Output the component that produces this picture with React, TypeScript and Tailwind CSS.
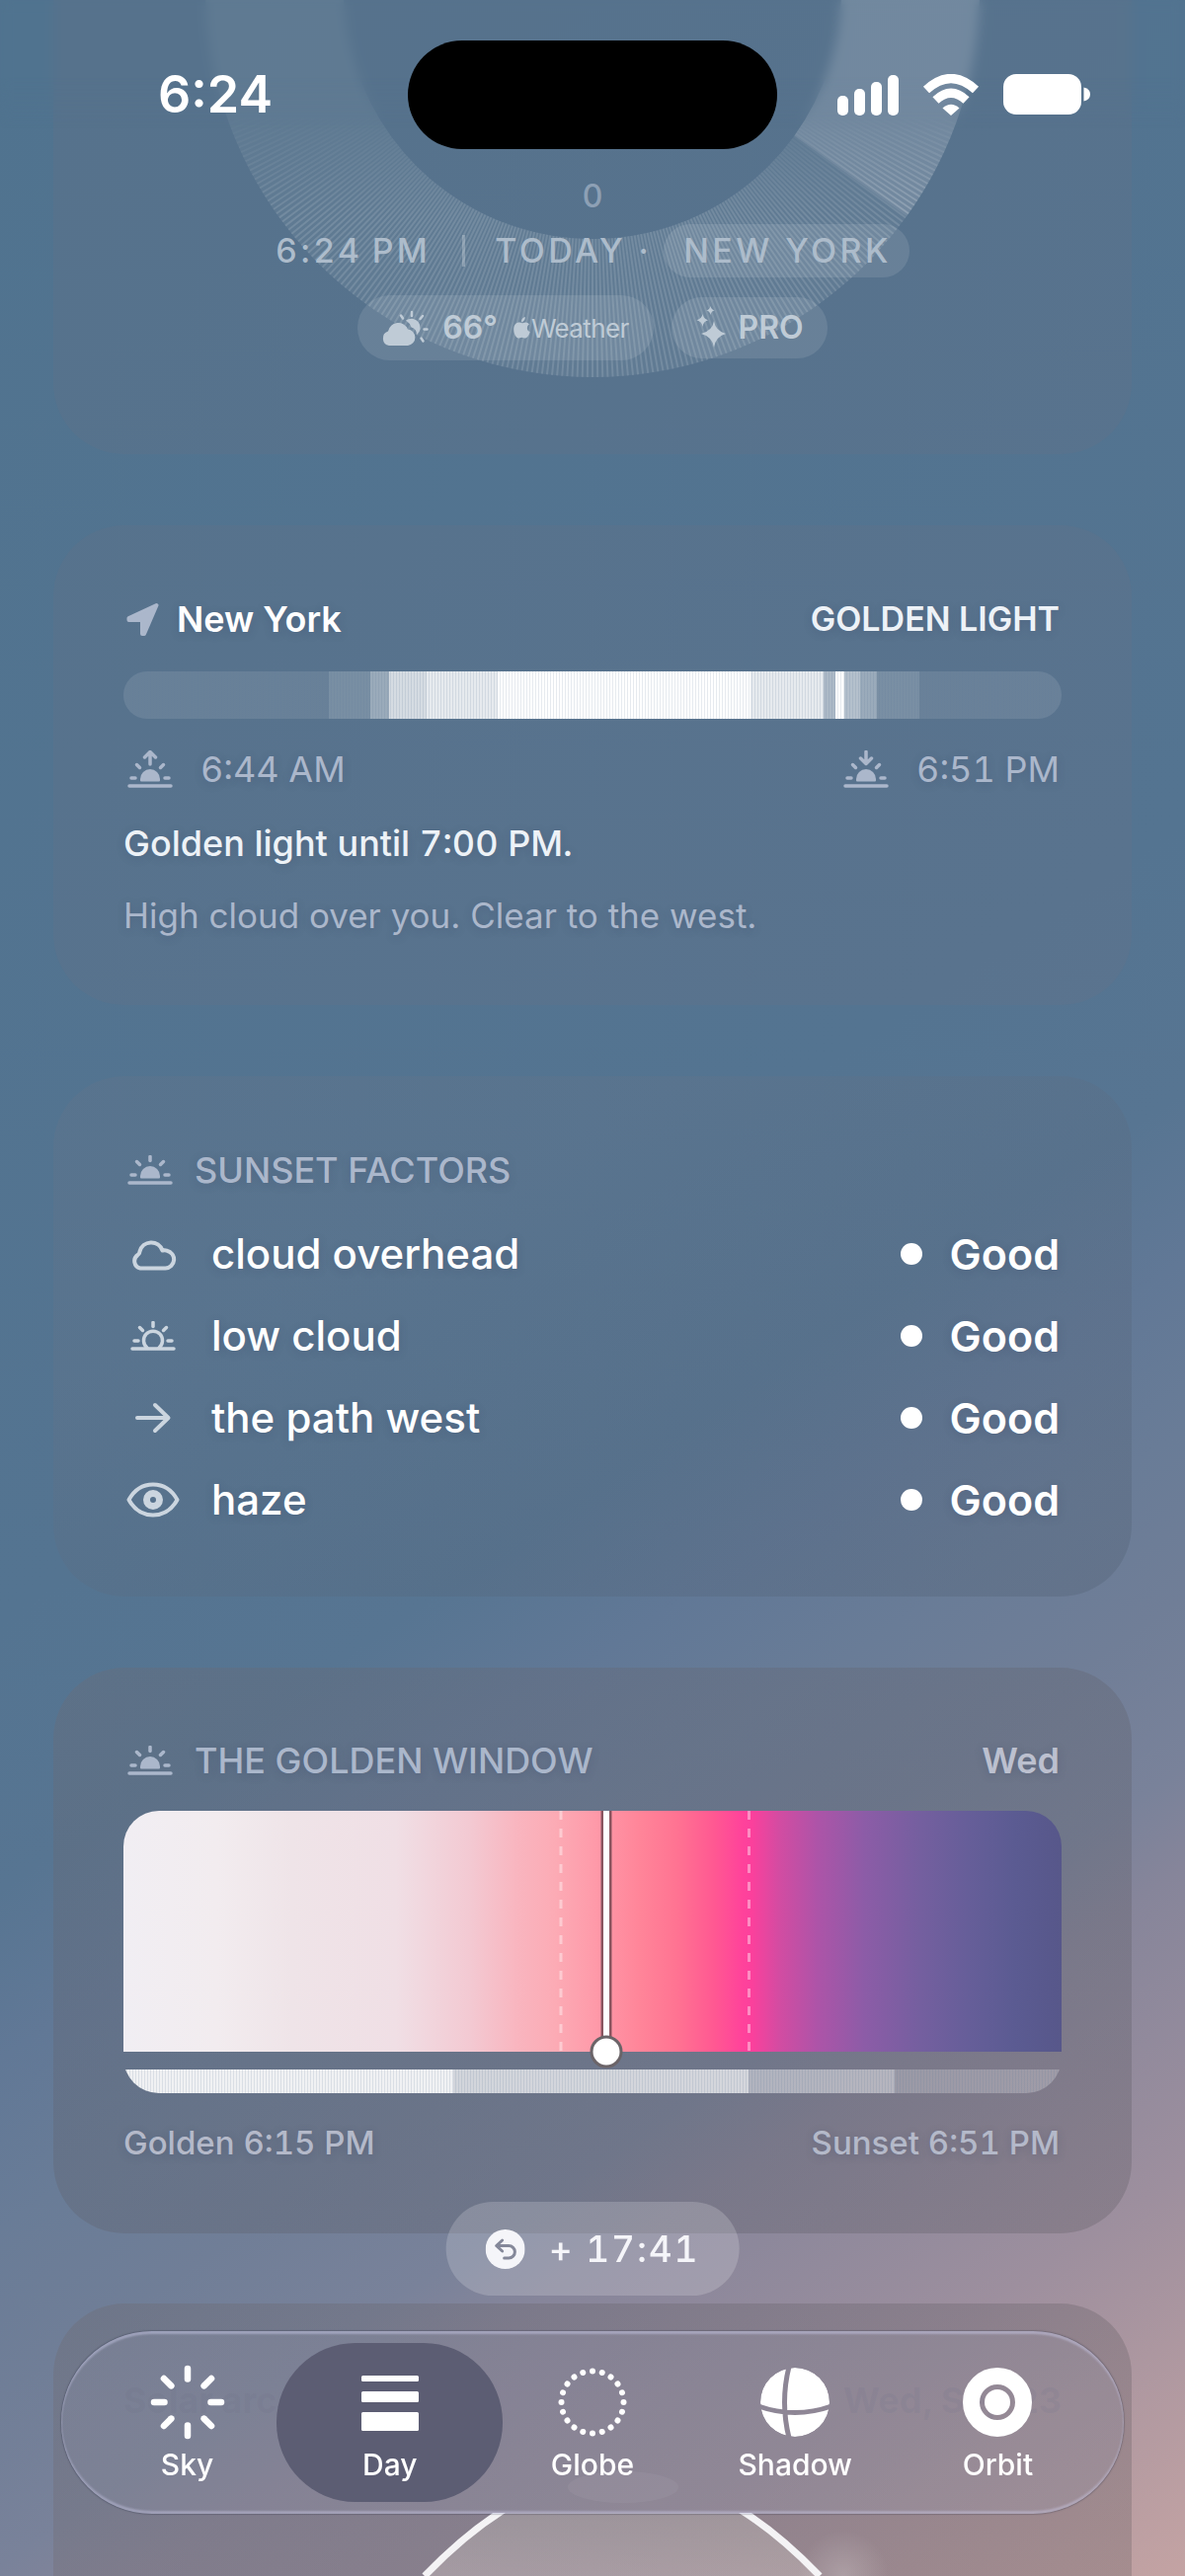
import type { ReactNode } from "react";

const FACTORS = [
  { name: "cloud overhead", rating: "Good", icon: <CloudIcon /> },
  { name: "low cloud", rating: "Good", icon: <SunIcon hollow /> },
  { name: "the path west", rating: "Good", icon: <ArrowIcon /> },
  { name: "haze", rating: "Good", icon: <EyeIcon /> },
];

// share of the day (out of 950) and brightness of each daylight band
const DAY_BANDS = [
  { size: 208, tone: "bg-white/10" },
  { size: 42, tone: "bg-white/20" },
  { size: 19, tone: "bg-white/40" },
  { size: 38, tone: "bg-white/75" },
  { size: 72, tone: "bg-white/85" },
  { size: 256, tone: "bg-white" },
  { size: 74, tone: "bg-white/85" },
  { size: 12, tone: "bg-white/50" },
  { size: 9, tone: "bg-white" },
  { size: 16, tone: "bg-white/55" },
  { size: 17, tone: "bg-white/40" },
  { size: 43, tone: "bg-white/20" },
  { size: 144, tone: "bg-white/10" },
];

const WINDOW_BANDS = [
  { size: 334, tone: "bg-white/90" },
  { size: 299, tone: "bg-white/70" },
  { size: 148, tone: "bg-white/45" },
  { size: 169, tone: "bg-white/25" },
];

const TABS = [
  { label: "Sky", icon: <SkyIcon /> },
  { label: "Day", icon: <DayIcon /> },
  { label: "Globe", icon: <GlobeIcon /> },
  { label: "Shadow", icon: <ShadowIcon /> },
  { label: "Orbit", icon: <OrbitIcon /> },
];

type SunIconProps = {
  arrow?: "up" | "down";
  hollow?: boolean;
};

/** Sun on the horizon, with an optional rise / set arrow */
function SunIcon({ arrow, hollow }: SunIconProps) {
  return (
    <svg
      viewBox={arrow ? "0 -8 46 38" : "0 0 46 30"}
      className={arrow ? "w-[46px] h-[38px]" : "w-[46px] h-[30px]"}
      fill="none"
      stroke="currentColor"
      strokeWidth="3.500"
      strokeLinecap="round"
      strokeLinejoin="round"
      aria-hidden="true"
    >
      <path d="M2 28H44" />
      {hollow ? (
        <path d="M17 27a9.5 9.5 0 1 1 12 0" />
      ) : (
        <path d="M13 22.500V21a10 10 0 0 1 20 0V22.500q0 1-1 1H14q-1 0-1-1z" fill="currentColor" stroke="none" />
      )}
      <path d="M4 20H8M38 20H42M9.500 6.500l3 3M36.500 6.500l-3 3" />
      {!arrow && <path d="M23 1.500V5.500" />}
      {arrow === "up" && <path d="M23 6V-6M17.500-1L23-6.500 28.500-1" />}
      {arrow === "down" && <path d="M23-6.500V5M17.500 0L23 5.500 28.500 0" />}
    </svg>
  );
}

function CloudIcon() {
  return (
    <svg viewBox="0 0 48 34" className="w-12 h-[34px]" fill="none" stroke="currentColor" strokeWidth="4" strokeLinejoin="round" aria-hidden="true">
      <path d="M11 31.500H36.500a9 9 0 0 0 1.500-17.800 6 6 0 0 0-4.500-.2A12 12 0 0 0 10.500 14.500q0 2-2 3.500A7.500 7.500 0 0 0 11 31.500z" />
    </svg>
  );
}

function ArrowIcon() {
  return (
    <svg viewBox="0 0 38 32" className="w-[38px] h-8" fill="none" stroke="currentColor" strokeWidth="4" strokeLinecap="round" strokeLinejoin="round" aria-hidden="true">
      <path d="M3 16H34M21 3L34.500 16 21 29" />
    </svg>
  );
}

function EyeIcon() {
  return (
    <svg viewBox="0 0 54 36" className="w-[54px] h-9" fill="none" stroke="currentColor" aria-hidden="true">
      <path d="M2.500 18C8 8 17 2.500 27 2.500S46 8 51.500 18C46 28 37 33.500 27 33.500S8 28 2.500 18z" strokeWidth="4" strokeLinejoin="round" />
      <circle cx="27" cy="18" r="6.500" strokeWidth="7" />
    </svg>
  );
}

function CloudSunIcon() {
  return (
    <svg viewBox="0 0 48 36" className="w-12 h-9" aria-hidden="true">
      <g stroke="currentColor" strokeWidth="2.500" strokeLinecap="round">
        <path d="M31 2V6M20 5.500l2 3M42 6l-2.500 3M43.500 19.500H46.500M40.500 28.500l2 3" />
      </g>
      <path d="M25 10.500a9 9 0 1 1 11 14.500Q36 19 30.500 17.500 29 13 25 10.500z" fill="currentColor" />
      <path d="M8 36a7.500 7.500 0 0 1-1-14.500A10.500 10.500 0 0 1 27 19.500a8.300 8.300 0 0 1 0 16.500z" fill="currentColor" />
    </svg>
  );
}

function AppleIcon() {
  return (
    <svg viewBox="0 0 17 22" className="w-[17px] h-[22px]" fill="currentColor" aria-hidden="true">
      <path d="M11.800 0q.2 2-1 3.500T8 5q-.2-2 1-3.300T11.800 0z" />
      <path d="M8.600 6.300c1 0 2-.9 3.700-.8 1.500.1 2.800.8 3.600 2-3 2-2.600 6.300.8 7.600C15.900 17.800 14.200 21.500 12 21.500c-1.400 0-1.900-.8-3.500-.8S6.300 21.500 5 21.500C2.700 21.500.2 17 .2 12.800c0-4.300 2.400-7.200 5-7.200 1.400 0 2.600.7 3.400.7z" />
    </svg>
  );
}

function SparklesIcon() {
  return (
    <svg viewBox="0 0 32 44" className="w-8 h-11" fill="currentColor" aria-hidden="true">
      <path d="M19 15q1.500 10 12 13-10.500 3-12 14Q17.500 31 6 28 17.500 25 19 15z" />
      <path d="M7.500 8q.7 5 5.500 6.200Q8.200 15.500 7.500 21 6.700 15.500 1.500 14.200 6.700 13 7.500 8z" />
      <path d="M15.500 0q.6 3.500 4 4.300Q16.100 5.200 15.500 9q-.6-3.800-4-4.700Q14.900 3.500 15.500 0z" />
    </svg>
  );
}

function LocationIcon() {
  return (
    <svg viewBox="0 0 34 36" className="ml-0.5 w-[34px] h-9" fill="currentColor" stroke="currentColor" strokeWidth="4" strokeLinejoin="round" aria-hidden="true">
      <path d="M31.500 4L3.500 17v2H17V33h2z" />
    </svg>
  );
}

function UndoIcon() {
  return (
    <svg viewBox="0 0 40 40" className="w-10 h-10" aria-hidden="true">
      <circle cx="20" cy="20" r="20" fill="#f5f5f9" />
      <path d="M17 11L11 16.500 17 22M12 16.500H23.500a6.200 6.200 0 0 1 0 12.500H19" fill="none" stroke="#85889a" strokeWidth="3" strokeLinecap="round" strokeLinejoin="round" />
    </svg>
  );
}

function SkyIcon() {
  return (
    <svg viewBox="-38 -38 76 76" className="w-[76px] h-[76px]" stroke="white" strokeWidth="6.500" strokeLinecap="round" aria-hidden="true">
      {[0, 45, 90, 135, 180, 225, 270, 315].map((angle) => (
        <path key={angle} d="M0-23.500V-34" transform={`rotate(${angle})`} />
      ))}
    </svg>
  );
}

function DayIcon() {
  return (
    <svg viewBox="-38 -38 76 76" className="w-[76px] h-[76px]" fill="white" aria-hidden="true">
      <rect x="-29" y="-27" width="58" height="6" rx="1.500" />
      <rect x="-29" y="-11" width="58" height="11" rx="1.500" />
      <rect x="-29" y="10" width="58" height="19" rx="1.500" />
    </svg>
  );
}

function GlobeIcon() {
  return (
    <svg viewBox="-38 -38 76 76" className="w-[76px] h-[76px]" fill="white" aria-hidden="true">
      {Array.from({ length: 20 }, (_, i) => (
        <circle key={i} cy="-31.500" r="3" transform={`rotate(${i * 18})`} />
      ))}
    </svg>
  );
}

function ShadowIcon() {
  return (
    <svg viewBox="-38 -38 76 76" className="w-[76px] h-[76px]" aria-hidden="true">
      <defs>
        <mask id="shadow-cut">
          <circle r="35" fill="white" />
          <path d="M-6-36Q-15 0-6 36M-37 4Q0 17 37 4" fill="none" stroke="black" strokeWidth="5" />
        </mask>
      </defs>
      <circle r="35" fill="white" mask="url(#shadow-cut)" />
    </svg>
  );
}

function OrbitIcon() {
  return (
    <svg viewBox="-38 -38 76 76" className="w-[76px] h-[76px]" fill="none" stroke="white" aria-hidden="true">
      <circle r="26.500" strokeWidth="17" />
      <circle r="13" fill="white" stroke="none" />
    </svg>
  );
}

const OUTER = 392;
const INNER = 252;

function polar(radius: number, degrees: number) {
  const a = (degrees * Math.PI) / 180;
  return `${(radius * Math.cos(a)).toFixed(2)} ${(radius * Math.sin(a)).toFixed(2)}`;
}

/** Ring segment between two angles, clockwise from three o'clock */
function sector(from: number, to: number) {
  return `M${polar(OUTER, from)}A${OUTER} ${OUTER} 0 0 1 ${polar(OUTER, to)}L${polar(INNER, to)}A${INNER} ${INNER} 0 0 0 ${polar(INNER, from)}Z`;
}

function DayWheel() {
  const spokes = Array.from({ length: 240 }, (_, i) => i * 0.75);

  return (
    <svg viewBox="-392 -392 784 784" className="absolute -top-[402px] left-1/2 w-[784px] h-[784px] -translate-x-1/2" aria-hidden="true">
      <defs>
        <linearGradient id="spoke-fade" gradientUnits="userSpaceOnUse" x1="0" y1="125" x2="0" y2="230">
          <stop offset="0" stopColor="#000" />
          <stop offset="1" stopColor="#fff" />
        </linearGradient>
        <mask id="spoke-mask" maskUnits="userSpaceOnUse" x="-392" y="0" width="784" height="392">
          <rect x="-392" width="784" height="392" fill="url(#spoke-fade)" />
        </mask>
      </defs>
      <path d={sector(35.8, 180)} fill="white" fillOpacity="0.06" />
      <path d={sector(0, 35.8)} fill="white" fillOpacity="0.16" />
      <g mask="url(#spoke-mask)" stroke="white">
        {spokes.map((a) => (
          <path key={a} d={`M${polar(INNER, a)}L${polar(OUTER, a)}`} strokeWidth="2" strokeOpacity={a < 35.8 ? 0.22 : 0.13} />
        ))}
      </g>
    </svg>
  );
}

function Bands({ bands }: { bands: { size: number; tone: string }[] }) {
  return (
    <div className="relative flex w-full h-full">
      {bands.map((band, i) => (
        <div key={i} className={band.tone} style={{ flex: `${band.size} 0 0` }} />
      ))}
      <div className="absolute inset-0 bg-[repeating-linear-gradient(90deg,rgba(100,125,155,0.16)_0_1px,transparent_1px_3px)]" />
    </div>
  );
}

function Card({ tint, children }: { tint: string; children: ReactNode }) {
  return (
    <section className={`mx-[54px] mt-[72px] px-[71px] rounded-[72px] text-[#abb7cb] [text-shadow:0_2px_8px_rgba(50,65,95,0.25)] ${tint}`}>
      {children}
    </section>
  );
}

function StatusBar() {
  return (
    <header className="absolute inset-x-0 top-[41px] flex items-center justify-between pl-[160px] pr-24 text-white">
      <time className="w-[253px] text-[52px] leading-[56px] font-semibold">6:24</time>
      <div className="w-[374px] h-[110px] rounded-[55px] bg-black" />
      <div className="flex w-[317px] items-center justify-end gap-6">
        <svg viewBox="0 0 62 42" className="w-[62px] h-[42px]" fill="white" role="img" aria-label="Signal">
          <rect x="0" y="22" width="11" height="20" rx="5" />
          <rect x="17" y="15" width="11" height="27" rx="5" />
          <rect x="34" y="8" width="11" height="34" rx="5" />
          <rect x="51" y="1" width="11" height="41" rx="5" />
        </svg>
        <svg viewBox="0 0 58 42" className="w-[58px] h-[42px]" fill="none" stroke="white" strokeWidth="9" role="img" aria-label="Wi-Fi">
          <path d="M4 16Q29-7 54 16M13.500 26.500Q29 12 44.500 26.500" strokeLinejoin="round" />
          <path d="M29 42L20.500 34.500Q29 27 37.500 34.500z" fill="white" stroke="none" />
        </svg>
        <svg viewBox="0 0 88 42" className="w-[88px] h-[42px]" fill="white" role="img" aria-label="Battery">
          <rect width="79" height="41" rx="13" />
          <path d="M81.500 13.500q6.500 1.500 6.500 7t-6.500 7z" />
        </svg>
      </div>
    </header>
  );
}

function Hero() {
  return (
    <section className="relative mx-[54px] pt-[180px] pb-[95px] rounded-b-[72px] bg-[#777381]/15 text-[#adbccb]">
      <DayWheel />
      <div className="relative flex flex-col items-center">
        <p className="text-[32px] leading-[38px] font-medium text-[#8da0b5]">0</p>
        <div className="mt-[9px] flex items-center text-[34px] leading-[54px] font-medium tracking-widest">
          <span>6:24{"\u2009"}PM</span>
          <span className="ml-8 mr-[30px] w-[3px] h-8 bg-white/25" />
          <span>TODAY ·</span>
          <button type="button" className="ml-3 pl-5 pr-[18px] rounded-full bg-white/10 tracking-widest">
            NEW YORK
          </button>
        </div>
        <div className="mt-[18px] flex items-center gap-[18px] text-[#bfcbd6]">
          <button type="button" className="flex h-[66px] items-center pl-6 pr-[25px] rounded-full bg-white/10">
            <CloudSunIcon />
            <span className="ml-[14px] text-[32px] font-semibold">66°</span>
            <span className="ml-4 flex items-center gap-px text-[26px] tracking-tight">
              <AppleIcon />
              Weather
            </span>
          </button>
          <button type="button" className="flex h-[62px] items-center gap-3 px-6 rounded-full bg-white/10 text-[32px] font-semibold">
            <SparklesIcon />
            PRO
          </button>
        </div>
      </div>
    </section>
  );
}

function DayCard() {
  return (
    <Card tint="bg-[#777381]/15 pt-[71px] pb-[67px]">
      <div className="flex items-center pr-0.5 leading-[48px]">
        <LocationIcon />
        <h2 className="ml-[18px] text-[36px] font-semibold text-white">New York</h2>
        <span className="ml-auto text-[34px] font-semibold text-[#edf2f7]">GOLDEN LIGHT</span>
      </div>
      <div className="mt-[29px] h-12 rounded-[24px] overflow-hidden">
        <Bands bands={DAY_BANDS} />
      </div>
      <div className="mt-[27px] flex items-center pr-0.5 text-[36px] leading-[48px] tabular-nums">
        <span className="ml-1">
          <SunIcon arrow="up" />
        </span>
        <span className="ml-7">6:44 AM</span>
        <span className="ml-auto">
          <SunIcon arrow="down" />
        </span>
        <span className="ml-7">6:51 PM</span>
      </div>
      <p className="mt-[27px] text-[36px] leading-[48px] font-medium text-[#edf2f7] tabular-nums">Golden light until 7:00 PM.</p>
      <p className="mt-[25px] text-[35px] leading-[48px]">High cloud over you. Clear to the west.</p>
    </Card>
  );
}

function FactorsCard() {
  return (
    <Card tint="bg-linear-to-br from-[#777381]/15 from-30% to-[#3b4a59]/20 pt-[71px] pb-[68px]">
      <h2 className="flex items-center gap-[22px] pl-1 text-[36px] leading-[48px] font-medium">
        <SunIcon />
        SUNSET FACTORS
      </h2>
      <ul className="mt-[31px] flex flex-col gap-[23px]">
        {FACTORS.map((factor) => (
          <li key={factor.name} className="flex items-center pr-0.5 text-[42px] leading-[60px] font-medium text-white">
            <span className="flex w-[60px] justify-center text-[#cbd5df]">{factor.icon}</span>
            <span className="ml-[29px]">{factor.name}</span>
            <span className="ml-auto mr-7 size-[22px] rounded-full bg-white" />
            <span className="text-[43px] font-semibold">{factor.rating}</span>
          </li>
        ))}
      </ul>
    </Card>
  );
}

function GoldenWindowCard() {
  return (
    <Card tint="bg-linear-to-br from-[#706a72]/30 to-[#3a3c40]/20 pt-[70px] pb-[72px]">
      <div className="flex items-center justify-between pr-0.5 text-[36px] leading-[48px]">
        <h2 className="flex items-center gap-[22px] pl-1 font-medium">
          <SunIcon />
          THE GOLDEN WINDOW
        </h2>
        <span className="font-semibold text-[#bcc0cf]">Wed</span>
      </div>
      <div className="relative mt-[27px]">
        <div className="flex flex-col gap-[18px] rounded-[36px] overflow-hidden">
          <div className="h-[244px] bg-[linear-gradient(90deg,#f1eef3_0%,#f2ecef_10%,#efe4e8_18%,#f0dfe5_29%,#f3c9d2_37%,#f9b5bf_42%,#fcabb5_46%,#fe9baa_50%,#ff8599_55%,#ff7392_59%,#ff5892_63%,#ff429b_66%,#fb409c_67%,#d24ca2_70%,#ad54a8_74%,#8c5ca7_79%,#745f9f_85%,#665e99_90%,#5b5b92_95%,#57578a_100%)]" />
          <div className="h-6">
            <Bands bands={WINDOW_BANDS} />
          </div>
        </div>
        <svg viewBox="0 0 950 286" preserveAspectRatio="none" className="absolute inset-0 w-full h-full overflow-visible" aria-hidden="true">
          <path d="M443 0V243M633.500 0V243" stroke="white" strokeOpacity="0.4" strokeWidth="3" strokeDasharray="9 9" />
          <path d="M489 0V236" stroke="#8a5560" strokeWidth="11" />
          <path d="M489 0V236" stroke="white" strokeWidth="6" />
          <circle cx="489" cy="244" r="15" fill="white" stroke="#6b6468" strokeWidth="3" />
        </svg>
      </div>
      <div className="mt-[30px] flex justify-between pr-0.5 text-[33px] leading-10 font-medium text-[#b4b9c9] tabular-nums">
        <span>Golden 6:15 PM</span>
        <span>Sunset 6:51 PM</span>
      </div>
    </Card>
  );
}

function SolarArcCard() {
  return (
    <section className="mx-[54px] mt-[71px] rounded-t-[72px] bg-linear-to-r from-[#6e6262]/25 to-[#3a3c40]/20">
      <div className="flex justify-between px-[71px] pt-[73px] text-[36px] leading-[50px] font-bold text-[#5d6178]/12">
        <h2>Solar arc</h2>
        <span>Wed, Sep 23</span>
      </div>
      <svg viewBox="0 0 1092 153" preserveAspectRatio="xMidYMax slice" className="block w-full h-[153px]" aria-hidden="true">
        <defs>
          <linearGradient id="arc-fill" x1="0" y1="0" x2="0" y2="1">
            <stop offset="0" stopColor="#b0b0aa" stopOpacity="0.35" />
            <stop offset="1" stopColor="#d0c4c4" stopOpacity="0.4" />
          </linearGradient>
          <radialGradient id="arc-glow">
            <stop offset="0" stopColor="white" stopOpacity="0.2" />
            <stop offset="1" stopColor="white" stopOpacity="0" />
          </radialGradient>
          <clipPath id="arc-clip">
            <rect y="89" width="1092" height="64" />
          </clipPath>
        </defs>
        <g clipPath="url(#arc-clip)">
          <path d="M376 153Q576-56 776 153z" fill="url(#arc-fill)" />
          <path d="M376 153Q576-56 776 153" fill="none" stroke="#f4f3f5" strokeWidth="7" />
        </g>
        <ellipse cx="577" cy="63" rx="56" ry="16" fill="white" fillOpacity="0.06" />
        <circle cx="800" cy="153" r="46" fill="url(#arc-glow)" />
      </svg>
    </section>
  );
}

function TabBar() {
  return (
    <nav className="fixed inset-x-[62px] bottom-[63px] flex h-[185px] px-[25px] rounded-[92px] bg-[#a3a6c4]/18 shadow-[inset_0_3px_2px_rgba(205,205,235,0.45),inset_0_-3px_2px_rgba(205,205,235,0.4),0_0_2px_rgba(30,35,55,0.7)]">
      {TABS.map((tab) => {
        const active = tab.label === "Day";
        return (
          <button
            key={tab.label}
            type="button"
            aria-current={active ? "page" : undefined}
            className="relative flex flex-1 flex-col items-center pt-[34px] text-[30px] leading-[36px] font-medium text-white"
          >
            {active && <span className="absolute -inset-x-3 inset-y-3 rounded-[80px] bg-[#5c5d73]" />}
            <span className="relative">{tab.icon}</span>
            <span className="relative mt-[7px]">{tab.label}</span>
          </button>
        );
      })}
    </nav>
  );
}

export default function App() {
  return (
    <div className="relative min-h-screen overflow-hidden font-['Inter','Liberation_Sans',sans-serif] bg-[linear-gradient(146deg,#50738f_0%,#547491_48%,#577592_56%,#617896_61%,#697c97_66%,#707e97_71%,#79829a_76%,#86859a_79%,#9d8f9e_88%,#c4a3a3_100%)]">
      <main>
        <Hero />
        <DayCard />
        <FactorsCard />
        <GoldenWindowCard />
        <SolarArcCard />
      </main>

      {/* soft edge under the status bar */}
      <div className="absolute inset-x-0 top-0 h-[130px] backdrop-blur-[6px] [mask-image:linear-gradient(black_60%,transparent)]" />
      <StatusBar />

      <button
        type="button"
        className="fixed left-1/2 bottom-[284px] flex h-[95px] -translate-x-1/2 items-center gap-6 px-10 rounded-full bg-white/18 text-[37px] font-medium tracking-wider tabular-nums whitespace-nowrap text-[#f5f5f9]"
      >
        <UndoIcon />
        + 17:41
      </button>
      <TabBar />
    </div>
  );
}
